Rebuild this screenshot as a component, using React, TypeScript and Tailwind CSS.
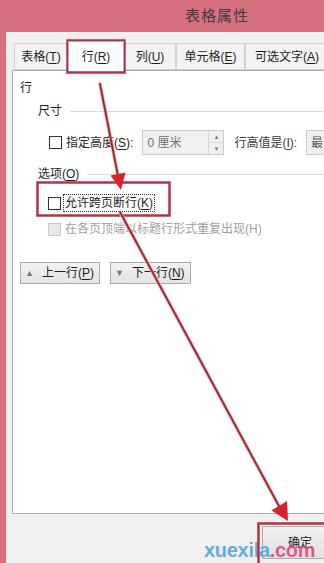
import type { ReactNode } from "react";

const font = "font-['Liberation_Sans','Noto_Sans_CJK_SC',sans-serif]";

function Key({ k }: { k: string }) {
  return (
    <>
      (<span className="underline underline-offset-2">{k}</span>)
    </>
  );
}

function Tab({ children, width, active }: { children: ReactNode; width: string; active?: boolean }) {
  if (active) {
    return (
      <div className={`${width} relative z-10 -mb-px flex h-[30px] shrink-0 items-center justify-center border border-b-0 border-[#adadad] bg-white`}>
        {children}
      </div>
    );
  }
  return (
    <div className={`${width} mt-[2px] flex h-[27px] shrink-0 items-center justify-center border border-[#d0d0d0] bg-[#f3f3f3]`}>
      {children}
    </div>
  );
}

function Box({ disabled }: { disabled?: boolean }) {
  return (
    <span
      className={`inline-block h-[13px] w-[13px] shrink-0 border ${
        disabled ? "border-[#c8c8c8] bg-[#e8e8e8]" : "border-[#333333] bg-white"
      }`}
    />
  );
}

function Group({ label, indent }: { label: ReactNode; indent: string }) {
  return (
    <div className={`flex items-center gap-2 ${indent}`}>
      <span className="leading-4">{label}</span>
      <span className="h-px flex-1 bg-[#dcdcdc]" />
    </div>
  );
}

function MoveButton({ up, children }: { up?: boolean; children: ReactNode }) {
  return (
    <div className="flex h-[22px] items-center gap-2 border border-[#acacac] bg-gradient-to-b from-[#f2f2f2] to-[#e3e3e3] pl-[4px] pr-[5px]">
      <span className="text-[9px] leading-none text-[#7a7a7a]">{up ? "▲" : "▼"}</span>
      <span className="leading-4">{children}</span>
    </div>
  );
}

function Annotations() {
  return (
    <svg className="pointer-events-none absolute inset-0" width="324" height="563" viewBox="0 0 324 563">
      <g fill="none" stroke="#b23448" strokeWidth="2.5">
        <rect x="67.5" y="40.5" width="57" height="32" />
        <rect x="37.5" y="182.5" width="132" height="33" />
        <rect x="258.5" y="523.5" width="70" height="45" />
      </g>
      <g strokeLinecap="round">
        <line x1="100" y1="84" x2="118" y2="176" stroke="#f2a5ad" strokeWidth="3.5" />
        <line x1="100" y1="84" x2="118" y2="176" stroke="#8f2b35" strokeWidth="1.8" />
        <line x1="120" y1="212" x2="280" y2="508" stroke="#f2a5ad" strokeWidth="3.5" />
        <line x1="120" y1="212" x2="280" y2="508" stroke="#8f2b35" strokeWidth="1.8" />
      </g>
      <polygon points="121,190 125.5,172.5 110.5,175.5" fill="#d8232f" />
      <polygon points="288,521 287,501 271.5,510.5" fill="#d8232f" />
    </svg>
  );
}

export default function App() {
  return (
    <div className={`relative flex h-[563px] w-[324px] flex-col overflow-hidden bg-[#d6707f] text-[12px] text-[#1e1e1e] ${font}`}>
      <div className="flex h-[32px] shrink-0 items-center pl-[185px] text-[15px] tracking-[1px] text-[#3d3d3d]">表格属性</div>

      <div className="ml-[6px] flex flex-1 flex-col bg-[#f0f0f0]">
        <div className="flex items-end pl-[8px] pt-[9px]">
          <Tab width="w-[54px]">
            表格<Key k="T" />
          </Tab>
          <Tab width="w-[56px]" active>
            行<Key k="R" />
          </Tab>
          <Tab width="w-[52px]">
            列<Key k="U" />
          </Tab>
          <Tab width="w-[69px]">
            单元格<Key k="E" />
          </Tab>
          <Tab width="w-[84px]">
            可选文字<Key k="A" />
          </Tab>
        </div>

        <div className="ml-[6px] flex h-[444px] flex-col border border-r-0 border-[#adadad] bg-white pt-[9px]">
          <div className="pl-[7px] leading-4">行</div>

          <div className="mt-[7px]">
            <Group label="尺寸" indent="pl-[25px]" />
          </div>

          <div className="mt-[11px] flex h-[25px] items-center whitespace-nowrap pl-[36px]">
            <Box />
            <span className="ml-[4px] leading-4">
              指定高度<Key k="S" />:
            </span>
            <div className="ml-[9px] flex h-[25px] w-[82px] shrink-0 items-center border border-[#cccccc] bg-[#f0f0f0]">
              <span className="flex-1 pl-[4px] text-[#707070]">0 厘米</span>
              <div className="flex h-full w-[15px] flex-col border-l border-[#d8d8d8]">
                <span className="flex flex-1 items-center justify-center text-[6px] leading-none text-[#7a7a7a]">▲</span>
                <span className="h-px bg-[#d8d8d8]" />
                <span className="flex flex-1 items-center justify-center text-[6px] leading-none text-[#7a7a7a]">▼</span>
              </div>
            </div>
            <span className="ml-[10px] leading-4 text-[#3a3a3a]">
              行高值是(<span className="underline underline-offset-2">I</span>):
            </span>
            <div className="ml-[9px] flex h-[25px] w-[40px] shrink-0 items-center border border-[#cccccc] bg-[#f0f0f0] pl-[4px] text-[#555555]">
              最
            </div>
          </div>

          <div className="mt-[11px]">
            <Group label={<>选项<Key k="O" /></>} indent="pl-[25px]" />
          </div>

          <div className="mt-[12px] flex items-center pl-[35px]">
            <Box />
            <span className="ml-[2px] border border-dotted border-[#333333] px-[1px] leading-4">
              允许跨页断行<Key k="K" />
            </span>
          </div>

          <div className="mt-[9px] flex items-center pl-[35px]">
            <Box disabled />
            <span className="ml-[4px] leading-4 text-[#a0a0a0]">在各页顶端以标题行形式重复出现(H)</span>
          </div>

          <div className="mt-[25px] flex gap-[10px] pl-[7px]">
            <MoveButton up>
              上一行<Key k="P" />
            </MoveButton>
            <MoveButton>
              下一行<Key k="N" />
            </MoveButton>
          </div>
        </div>

        <div className="flex flex-1 items-start justify-end pt-[12px]">
          <div className="flex h-[33px] w-[62px] shrink-0 items-center border border-r-0 border-[#adadad] bg-gradient-to-b from-[#f0f0f0] to-[#e2e2e2] pl-[25px]">
            确定
          </div>
        </div>
      </div>

      <div className="pointer-events-none absolute left-[204px] top-[540px] font-['Liberation_Sans',sans-serif] text-[20px] font-bold leading-5 tracking-[-0.3px]">
        <span className="text-[#4ea4dc]/90">xuexila</span>
        <span className="text-[#e2447c]/90">.com</span>
      </div>

      <Annotations />
    </div>
  );
}
